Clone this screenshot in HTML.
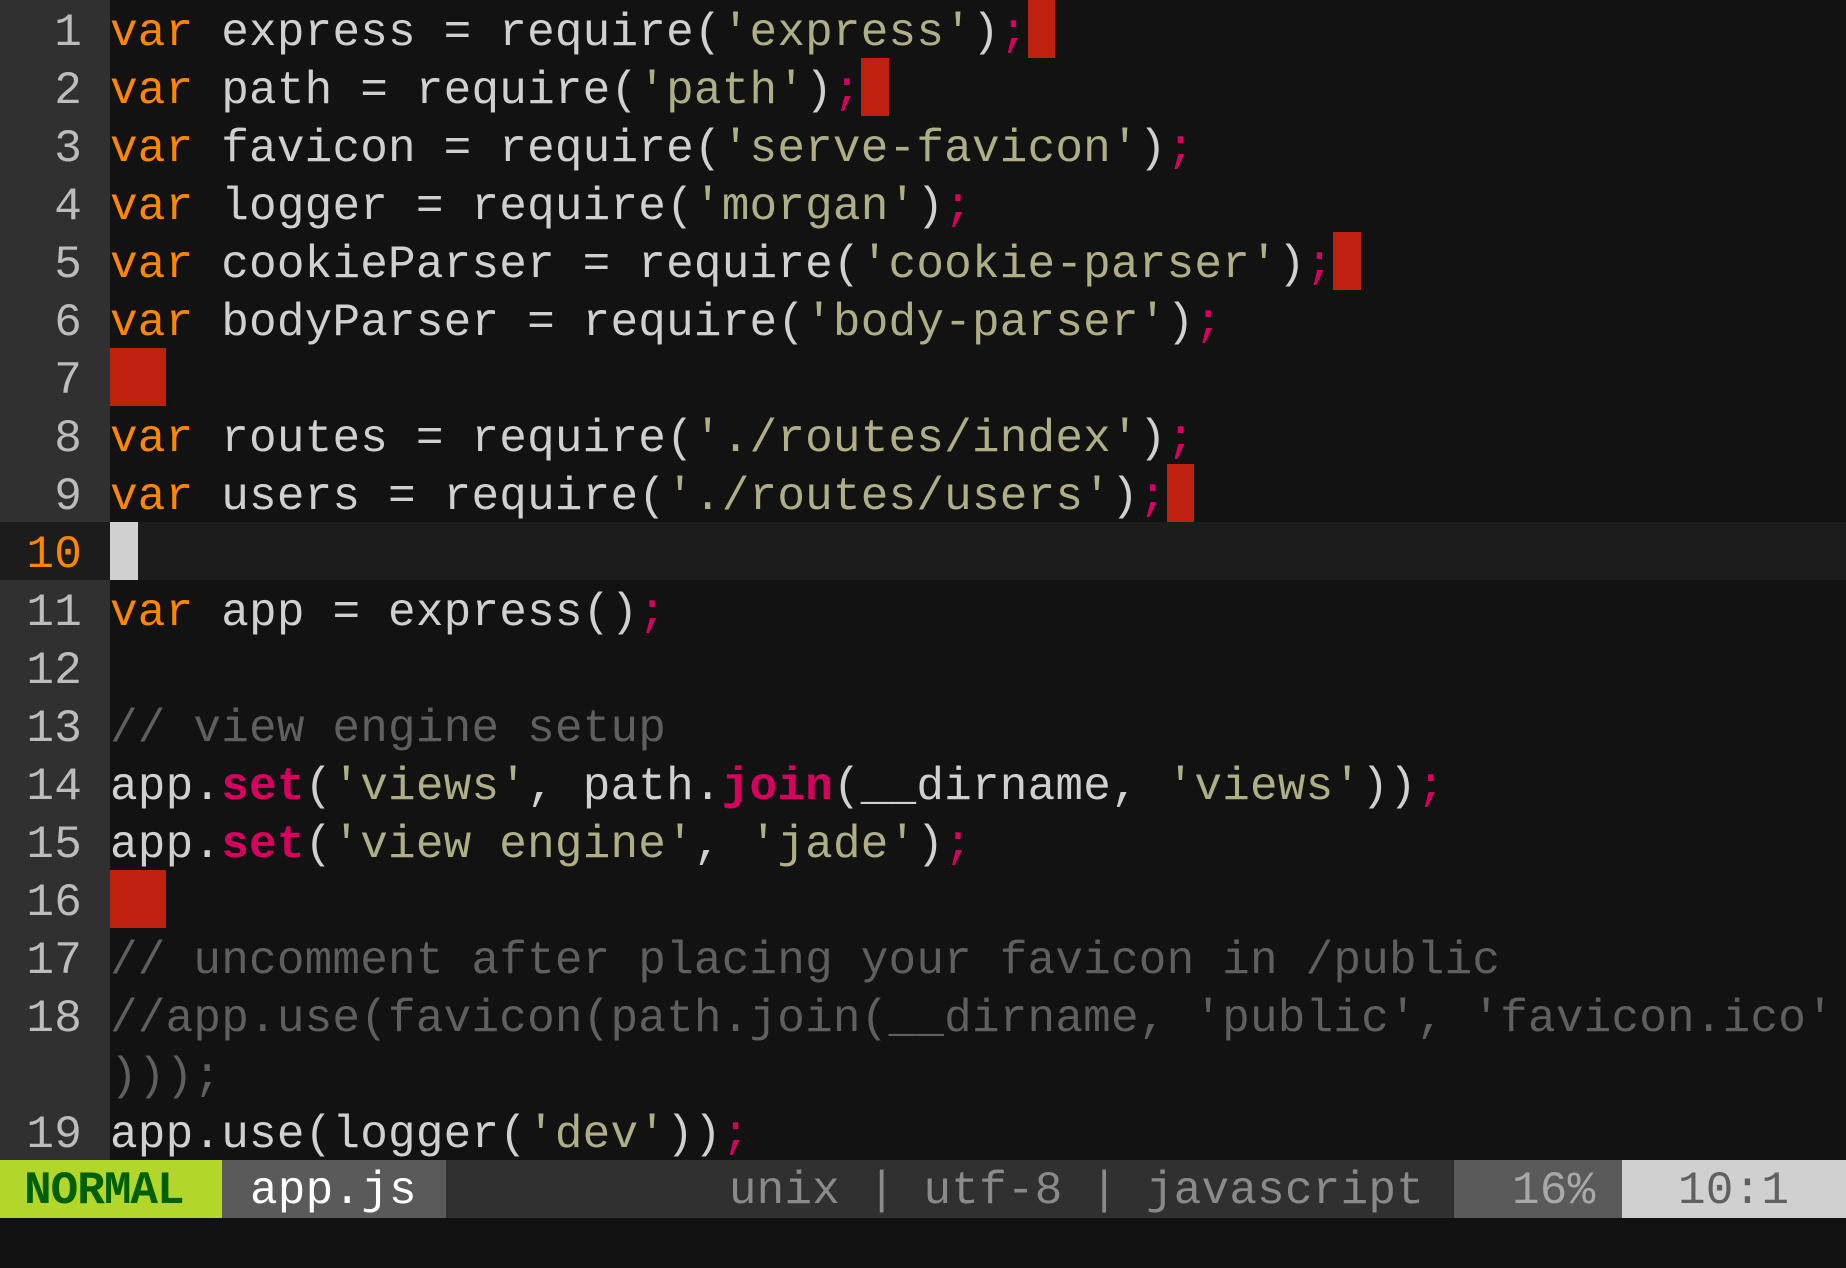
<!DOCTYPE html>
<html><head><meta charset="utf-8"><style>
*{margin:0;padding:0;box-sizing:border-box}
body{width:1846px;height:1268px;background:#121212;overflow:hidden;font-family:"Liberation Mono",monospace;font-size:46px;letter-spacing:0.2px;color:#d0d0d0}
.gut{position:absolute;left:0;top:0;width:110px;height:1160px;background:#303030}
.row{position:absolute;left:0;width:1846px;height:58px;line-height:58px;white-space:pre}
.n{position:absolute;left:0;top:4px;width:82px;text-align:right;color:#bcbcbc}
.t{position:absolute;left:110px;top:4px}
.k{color:#ff8700}.s{color:#afaf87}.p{color:#d7005f}.f{color:#d7005f;font-weight:bold}.c{color:#5f5f5f}
.r{background:#c0200f}.cur{background:#d0d0d0}
.t .r,.t .cur{display:inline-block;height:58px;vertical-align:top;position:relative;top:-4px}
.sb{position:absolute;top:1160px;height:58px;line-height:62px;white-space:pre}
</style></head><body>
<div class="gut"></div>
<div class="row" style="top:0"><span class="n">1</span><span class="t"><span class="k">var</span> express = require(<span class="s">'express'</span>)<span class="p">;</span><span class="r"> </span></span></div>
<div class="row" style="top:58px"><span class="n">2</span><span class="t"><span class="k">var</span> path = require(<span class="s">'path'</span>)<span class="p">;</span><span class="r"> </span></span></div>
<div class="row" style="top:116px"><span class="n">3</span><span class="t"><span class="k">var</span> favicon = require(<span class="s">'serve-favicon'</span>)<span class="p">;</span></span></div>
<div class="row" style="top:174px"><span class="n">4</span><span class="t"><span class="k">var</span> logger = require(<span class="s">'morgan'</span>)<span class="p">;</span></span></div>
<div class="row" style="top:232px"><span class="n">5</span><span class="t"><span class="k">var</span> cookieParser = require(<span class="s">'cookie-parser'</span>)<span class="p">;</span><span class="r"> </span></span></div>
<div class="row" style="top:290px"><span class="n">6</span><span class="t"><span class="k">var</span> bodyParser = require(<span class="s">'body-parser'</span>)<span class="p">;</span></span></div>
<div class="row" style="top:348px"><span class="n">7</span><span class="t"><span class="r">  </span></span></div>
<div class="row" style="top:406px"><span class="n">8</span><span class="t"><span class="k">var</span> routes = require(<span class="s">'./routes/index'</span>)<span class="p">;</span></span></div>
<div class="row" style="top:464px"><span class="n">9</span><span class="t"><span class="k">var</span> users = require(<span class="s">'./routes/users'</span>)<span class="p">;</span><span class="r"> </span></span></div>
<div class="row" style="top:522px;background:#1c1c1c"><span class="n" style="color:#ff8700">10</span><span class="t"><span class="cur"> </span></span></div>
<div class="row" style="top:580px"><span class="n">11</span><span class="t"><span class="k">var</span> app = express()<span class="p">;</span></span></div>
<div class="row" style="top:638px"><span class="n">12</span></div>
<div class="row" style="top:696px"><span class="n">13</span><span class="t c">// view engine setup</span></div>
<div class="row" style="top:754px"><span class="n">14</span><span class="t">app.<span class="f">set</span>(<span class="s">'views'</span>, path.<span class="f">join</span>(__dirname, <span class="s">'views'</span>))<span class="p">;</span></span></div>
<div class="row" style="top:812px"><span class="n">15</span><span class="t">app.<span class="f">set</span>(<span class="s">'view engine'</span>, <span class="s">'jade'</span>)<span class="p">;</span></span></div>
<div class="row" style="top:870px"><span class="n">16</span><span class="t"><span class="r">  </span></span></div>
<div class="row" style="top:928px"><span class="n">17</span><span class="t c">// uncomment after placing your favicon in /public</span></div>
<div class="row" style="top:986px"><span class="n">18</span><span class="t c">//app.use(favicon(path.join(__dirname, 'public', 'favicon.ico'</span></div>
<div class="row" style="top:1044px"><span class="t c">)));</span></div>
<div class="row" style="top:1102px"><span class="n">19</span><span class="t">app.use(logger(<span class="s">'dev'</span>))<span class="p">;</span></span></div>
<div class="sb" style="left:0;width:222px;background:#b2d62a;color:#005f00;font-weight:bold;letter-spacing:-1px;padding-left:24px">NORMAL</div>
<div class="sb" style="left:222px;width:224px;background:#5a5a5a;color:#ffffff;padding-left:28px">app.js</div>
<div class="sb" style="left:446px;width:1008px;background:#303030;color:#8a8a8a;text-align:right;padding-right:30px">unix | utf-8 | javascript</div>
<div class="sb" style="left:1454px;width:168px;background:#5a5a5a;color:#a8a8a8;padding-left:58px">16%</div>
<div class="sb" style="left:1622px;width:224px;background:#d0d0d0;color:#606060;padding-left:56px">10:1</div>
</body></html>
